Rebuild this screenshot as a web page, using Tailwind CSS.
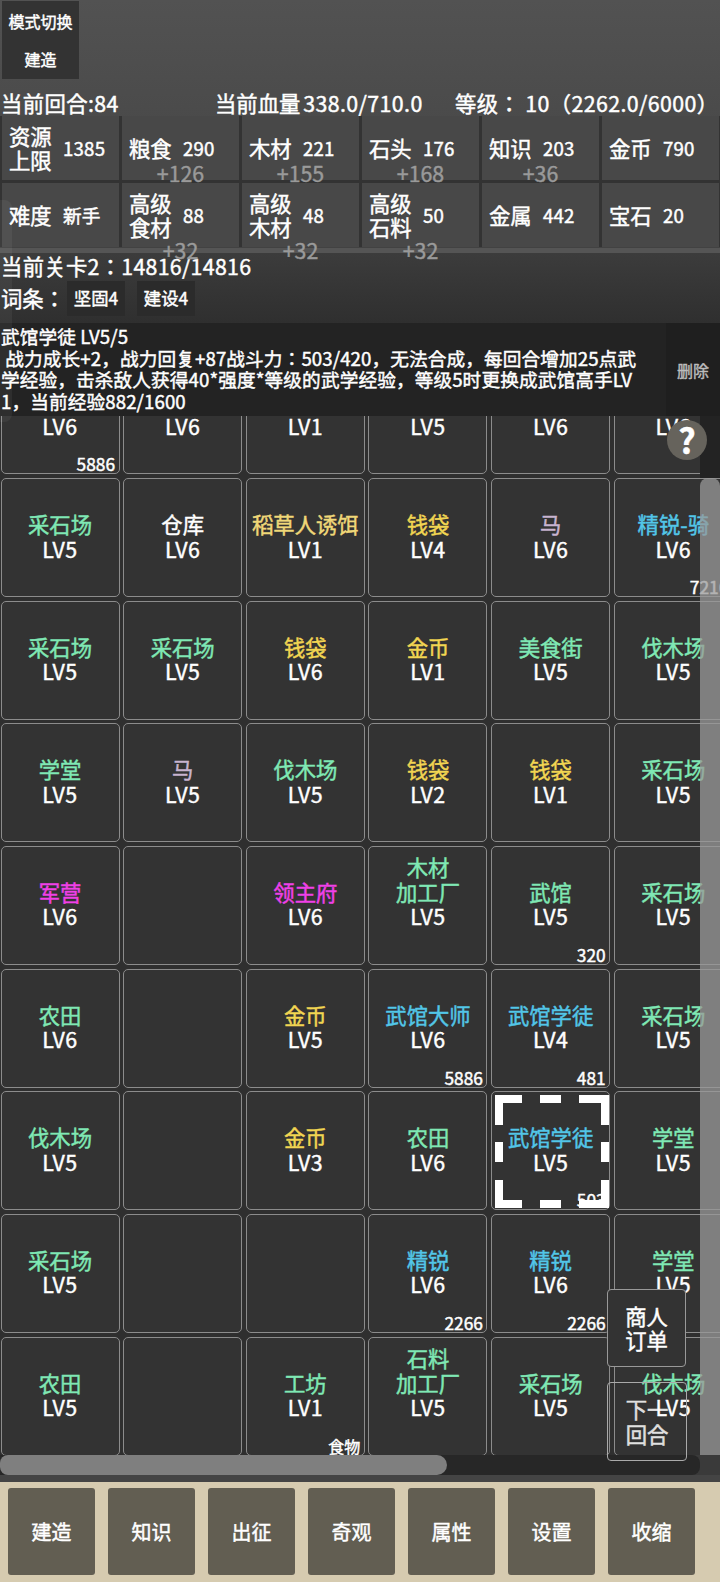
<!DOCTYPE html>
<html lang="ja">
<head>
<meta charset="UTF-8">
<title>建造</title>
<script src="https://cdn.jsdelivr.net/npm/@tailwindcss/browser@4"></script>
</head>
<body class="bg-[#333333] font-['Noto_Sans_CJK_JP','Noto_Sans',sans-serif] text-white [-webkit-text-stroke:0.45px]">
<div class="relative w-[720px] h-[1582px] overflow-hidden flex flex-col">

  <!-- top panel -->
  <div class="relative z-10 h-[248px] shrink-0 bg-gradient-to-b from-[#525252] to-[#424242]">
    <div class="ml-[2px] mt-[1px] w-[77px] h-[78px] bg-[#333333] flex flex-col items-center justify-between py-[8px] text-[16px]">
      <span>模式切换</span>
      <span>建造</span>
    </div>
    <div class="h-[37px] pt-[12px] pl-[1px] flex text-[21.33px] leading-[24px] whitespace-nowrap">
      <span class="w-[214px] tracking-[0.4px]">当前回合:84</span>
      <span class="w-[240px]">当前血量<span class="ml-[3px] tracking-[0.4px]">338.0/710.0</span></span>
      <span class="tracking-[0.4px]">等级： 10（2262.0/6000）</span>
    </div>
    <div id="res" class="pl-[2px] bg-[#333333] grid grid-cols-[repeat(6,117px)] grid-rows-[64px_64px] gap-[3px]"></div>
  </div>
  <div class="h-[5px] shrink-0 bg-[#555555]"></div>

  <!-- stage info -->
  <div class="h-[70px] shrink-0 bg-gradient-to-b from-[#3c3c3c] to-[#2f2f2f]">
    <div class="h-[27px] pl-[1px] pt-[1px] text-[21.33px] leading-[24px] tracking-[0.3px]">当前关卡2：14816/14816</div>
    <div class="flex items-center h-[36px] pl-[1px] text-[21.33px]">
      <span class="w-[66px]">词条：</span>
      <span class="w-[58px] h-[35px] bg-[#2b2b2b] flex items-center justify-center text-[17.33px]">坚固4</span>
      <span class="ml-[12px] w-[58px] h-[35px] bg-[#2b2b2b] flex items-center justify-center text-[17.33px]">建设4</span>
    </div>
  </div>

  <!-- selected building detail -->
  <div class="h-[93px] shrink-0 bg-[#232323] flex">
    <div class="w-[666px] pl-[1px] pt-[2px] text-[18.67px] leading-[21.5px] tracking-[0.1px]">
      <div>武馆学徒 LV5/5</div>
      <div class="whitespace-nowrap">&nbsp;战力成长+2，战力回复+87战斗力：503/420，无法合成，每回合增加25点武</div>
      <div class="whitespace-nowrap">学经验，击杀敌人获得40*强度*等级的武学经验，等级5时更换成武馆高手LV</div>
      <div>1，当前经验882/1600</div>
    </div>
    <div class="flex-1 bg-[#1f1f1f] flex items-center justify-center text-[16px] text-[#bbbbbb]">删除</div>
  </div>

  <!-- building grid, scrolled -->
  <div class="relative h-[1039px] shrink-0 overflow-hidden bg-[#2f2f2f]">
    <div id="grid" class="mt-[-60.67px] ml-[0.5px] grid grid-cols-[repeat(6,119px)] auto-rows-[119px] gap-[3.67px]"></div>
    <div class="absolute right-0 top-0 w-[20px] h-[62px] bg-[#232323]"></div>
    <div class="absolute right-0 top-[62px] bottom-0 w-[20px] rounded-t-[8px] bg-[#9a9a9a]/75"></div>
  </div>

  <!-- horizontal scrollbar -->
  <div class="h-[20px] shrink-0 bg-[#3a3a3a]">
    <div class="w-[700px] h-full bg-[#272727] rounded-r-[8px]">
      <div class="w-[447px] h-full rounded-l-[8px] rounded-r-[10px] bg-[#7f7f7f]"></div>
    </div>
  </div>
  <div class="h-[7px] shrink-0 bg-[#444444]"></div>

  <!-- bottom nav -->
  <div class="flex-1 bg-[#d6cbb0] flex gap-[13px] pl-[8px] pt-[6px] text-[20px]">
    <div class="w-[87px] h-[87px] rounded-[3px] bg-[#625e52] flex items-center justify-center">建造</div>
    <div class="w-[87px] h-[87px] rounded-[3px] bg-[#625e52] flex items-center justify-center">知识</div>
    <div class="w-[87px] h-[87px] rounded-[3px] bg-[#625e52] flex items-center justify-center">出征</div>
    <div class="w-[87px] h-[87px] rounded-[3px] bg-[#625e52] flex items-center justify-center">奇观</div>
    <div class="w-[87px] h-[87px] rounded-[3px] bg-[#625e52] flex items-center justify-center">属性</div>
    <div class="w-[87px] h-[87px] rounded-[3px] bg-[#625e52] flex items-center justify-center">设置</div>
    <div class="w-[87px] h-[87px] rounded-[3px] bg-[#625e52] flex items-center justify-center">收缩</div>
  </div>

  <!-- floating buttons -->
  <div class="absolute z-20 left-0 top-[200px] w-[12px] h-[222px] rounded-r-[8px] bg-white/5"></div>
  <div class="absolute left-[667px] top-[420px] w-[40px] h-[40px] rounded-full bg-[#66635c] flex items-center justify-center text-[34px] font-bold leading-none">?</div>
  <div class="absolute left-[607px] top-[1289px] w-[79px] h-[78px] rounded-[4px] border border-[#999999] bg-[#333333] flex items-center justify-center text-center text-[21.33px] leading-[24.5px]">商人<br>订单</div>
  <div class="absolute left-[607px] top-[1382px] w-[80px] h-[79px] rounded-[4px] border border-[#aaaaaa] flex items-center justify-center text-center text-[21.33px] leading-[24.5px] text-white/80">下一<br>回合</div>
</div>

<script>
// resource cells: label lines, value, income
const resources = [
  ['资源<br>上限', '1385', ''], ['粮食', '290', '+126'], ['木材', '221', '+155'], ['石头', '176', '+168'], ['知识', '203', '+36'], ['金币', '790', ''],
  ['难度', '新手', ''], ['高级<br>食材', '88', '+32'], ['高级<br>木材', '48', '+32'], ['高级<br>石料', '50', '+32'], ['金属', '442', ''], ['宝石', '20', '']
];
document.getElementById('res').innerHTML = resources.map(([label, value, income], i) => `
  <div class="relative bg-[#484848] flex items-center pl-[7px]">
    <div class="w-[54px] text-[21.33px] leading-[24.5px]">${label}</div>
    <div class="text-[18.67px] tracking-[0.2px]">${value}</div>
    ${income ? `<div class="absolute left-0 right-0 ${i < 6 ? 'top-[45px]' : 'top-[55px]'} text-center text-[21.33px] leading-[24px] text-[#9a9a9a]">${income}</div>` : ''}
  </div>`).join('');

const colors = {
  g: 'text-[#7fe8b4]', y: 'text-[#f2d652]', o: 'text-[#f0d878]', b: 'text-[#52c6e8]',
  m: 'text-[#f040e8]', l: 'text-[#c8b4d0]', w: 'text-white'
};
// name, colour, level, corner number
const rows = [
  ['', 'w', 6, '5886'], ['', 'w', 6], ['', 'w', 1], ['', 'w', 5], ['', 'w', 6], ['', 'w', 6],
  ['采石场', 'g', 5], ['仓库', 'w', 6], ['稻草人诱饵', 'o', 1], ['钱袋', 'y', 4], ['马', 'l', 6], ['精锐-骑', 'b', 6, '7216'],
  ['采石场', 'g', 5], ['采石场', 'g', 5], ['钱袋', 'y', 6], ['金币', 'y', 1], ['美食街', 'g', 5], ['伐木场', 'g', 5],
  ['学堂', 'g', 5], ['马', 'l', 5], ['伐木场', 'g', 5], ['钱袋', 'y', 2], ['钱袋', 'y', 1], ['采石场', 'g', 5],
  ['军营', 'm', 6], null, ['领主府', 'm', 6], ['木材<br>加工厂', 'g', 5], ['武馆', 'g', 5, '320'], ['采石场', 'g', 5],
  ['农田', 'g', 6], null, ['金币', 'y', 5], ['武馆大师', 'b', 6, '5886'], ['武馆学徒', 'b', 4, '481'], ['采石场', 'g', 5],
  ['伐木场', 'g', 5], null, ['金币', 'y', 3], ['农田', 'g', 6], ['武馆学徒', 'b', 5, '503', true], ['学堂', 'g', 5],
  ['采石场', 'g', 5], null, null, ['精锐', 'b', 6, '2266'], ['精锐', 'b', 6, '2266'], ['学堂', 'g', 5],
  ['农田', 'g', 5], null, ['工坊', 'g', 1, '食物'], ['石料<br>加工厂', 'g', 5], ['采石场', 'g', 5], ['伐木场', 'g', 5]
];
const selection = `<svg class="absolute left-[3px] top-[3px]" width="114" height="113" fill="none" stroke="white" stroke-width="8">
  <path d="M27 4H4V30M45 4H66M84 4H110V30M4 47V67M110 47V67M4 85V109H27M45 109H66M84 109H110V85"/></svg>`;
document.getElementById('grid').innerHTML = rows.map(tile => {
  if (!tile) return '<div class="rounded-[5px] border-[1.33px] border-[#8c8c8c] bg-[#333333]"></div>';
  const [name, color, level, corner, selected] = tile;
  const twoLines = name.includes('<br>');
  return `<div class="relative rounded-[5px] border-[1.33px] border-[#8c8c8c] bg-[#333333] flex flex-col items-center justify-center pb-[2px] text-center text-[21.33px] leading-[24.5px] whitespace-nowrap">
    ${name ? `<div class="${colors[color]} ${twoLines ? 'mt-[-24.5px]' : ''}">${name}</div>` : '<div>&nbsp;</div>'}
    <div class="tracking-[0.5px]">LV${level}</div>
    ${corner ? `<div class="absolute right-[3.5px] bottom-[-3px] ${corner === '食物' ? 'text-[16px]' : 'text-[17.33px]'} leading-[24px]">${corner}</div>` : ''}
    ${selected ? selection : ''}
  </div>`;
}).join('');
</script>
</body>
</html>
